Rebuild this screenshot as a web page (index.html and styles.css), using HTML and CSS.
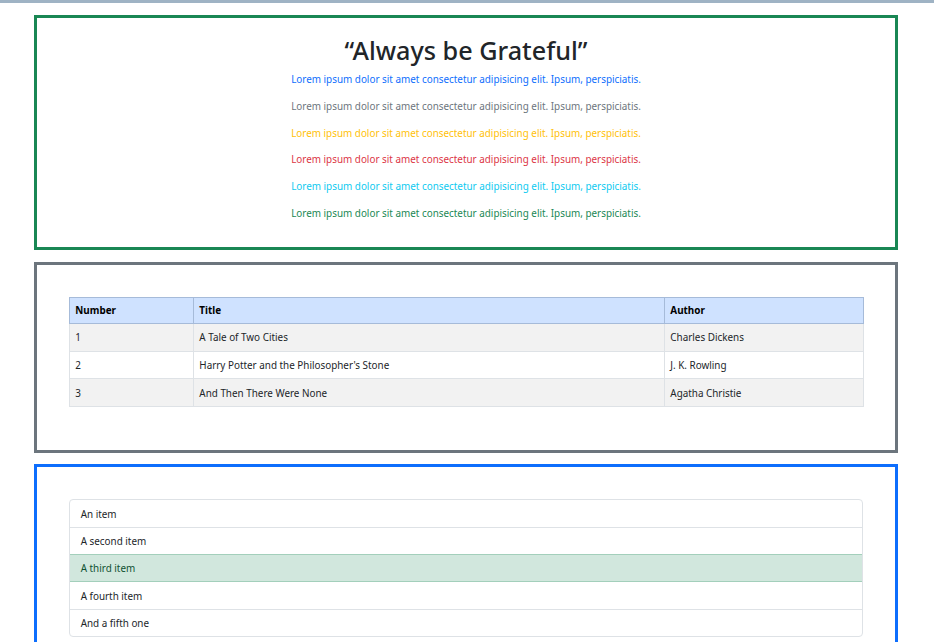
FILE: index.html
```html
<!DOCTYPE html>
<html lang="en">
<head>
<meta charset="utf-8">
<title>Always be Grateful</title>
<link rel="stylesheet" href="styles.css">
</head>
<body>
<div class="topbar"></div>
<main class="page">
  <section class="box box-success quote">
    <h1 class="title">“Always be Grateful”</h1>
    <p class="line c-primary">Lorem ipsum dolor sit amet consectetur adipisicing elit. Ipsum, perspiciatis.</p>
    <p class="line c-secondary">Lorem ipsum dolor sit amet consectetur adipisicing elit. Ipsum, perspiciatis.</p>
    <p class="line c-warning">Lorem ipsum dolor sit amet consectetur adipisicing elit. Ipsum, perspiciatis.</p>
    <p class="line c-danger">Lorem ipsum dolor sit amet consectetur adipisicing elit. Ipsum, perspiciatis.</p>
    <p class="line c-info">Lorem ipsum dolor sit amet consectetur adipisicing elit. Ipsum, perspiciatis.</p>
    <p class="line c-success">Lorem ipsum dolor sit amet consectetur adipisicing elit. Ipsum, perspiciatis.</p>
  </section>

  <section class="box box-secondary padded">
    <table class="books">
      <thead>
        <tr>
          <th class="col-num">Number</th>
          <th class="col-title">Title</th>
          <th class="col-author">Author</th>
        </tr>
      </thead>
      <tbody>
        <tr class="odd"><td>1</td><td>A Tale of Two Cities</td><td>Charles Dickens</td></tr>
        <tr><td>2</td><td>Harry Potter and the Philosopher's Stone</td><td>J. K. Rowling</td></tr>
        <tr class="odd"><td>3</td><td>And Then There Were None</td><td>Agatha Christie</td></tr>
      </tbody>
    </table>
  </section>

  <section class="box box-primary padded">
    <ul class="list">
      <li class="item">An item</li>
      <li class="item">A second item</li>
      <li class="item item-success">A third item</li>
      <li class="item">A fourth item</li>
      <li class="item">And a fifth one</li>
    </ul>
  </section>
</main>
</body>
</html>
```

FILE: styles.css
```css
* { box-sizing: border-box; }

html, body {
  margin: 0;
  padding: 0;
  background: #ffffff;
}

body {
  font-family: "Noto Sans", "Open Sans", "Liberation Sans", sans-serif;
  font-size: 9.9px;
  line-height: 16px;
  color: #212529;
  overflow: hidden;
}

.topbar {
  height: 3px;
  background: #9fb3c4;
}

.page {
  width: 864px;
  margin: 12px 0 0 34px;
  display: flex;
  flex-direction: column;
  gap: 11.5px;
}

.box {
  border: 3px solid;
  background: #fff;
}
.box-success { border-color: #198754; }
.box-secondary { border-color: #6c757d; }
.box-primary { border-color: #0d6efd; }

.quote {
  padding: 16px;
  text-align: center;
}

.title {
  margin: 0 0 5.33px;
  font-size: 25.2px;
  line-height: 32px;
  font-weight: 500;
  color: #212529;
}

.line {
  margin: 0 0 10.67px;
  font-size: 9.9px;
  line-height: 16px;
}

.c-primary { color: #0d6efd; }
.c-secondary { color: #6c757d; }
.c-warning { color: #ffc107; }
.c-danger { color: #dc3545; }
.c-info { color: #0dcaf0; }
.c-success { color: #198754; }

.padded {
  padding: 32px;
}

.books {
  width: 100%;
  border-collapse: collapse;
  margin-bottom: 10.67px;
  table-layout: fixed;
}

.books th, .books td {
  border: 1px solid #dee2e6;
  padding: 5.33px;
  text-align: left;
  line-height: 16px;
  vertical-align: top;
}

.books thead th {
  background: #cfe2ff;
  border-color: #a6bbd9;
  font-weight: 700;
  color: #000;
  padding-top: 4.67px;
  padding-bottom: 4.67px;
}

.col-num { width: 124px; }
.col-title { width: 471px; }
.col-author { width: 199px; }

.books tbody tr { background: #fff; }
.books tbody tr.odd { background: #f2f2f2; }
.books tbody td { color: #212529; }

.list {
  list-style: none;
  margin: 0;
  padding: 0;
  border: 1px solid #dee2e6;
  border-radius: 4px;
  overflow: hidden;
}

.item {
  padding: 5.33px 10.67px;
  line-height: 16px;
  border-top: 1px solid #dee2e6;
  color: #212529;
}
.item:first-child { border-top: 0; }

.item-success {
  background: #d1e7dd;
  color: #0f5132;
  border-top: 1px solid #a3cfbb;
  border-bottom: 1px solid #a3cfbb;
  margin-top: -1px;
  margin-left: -1px;
  margin-right: -1px;
  padding-left: 11.67px;
}
.item-success + .item { border-top: 0; }
```
